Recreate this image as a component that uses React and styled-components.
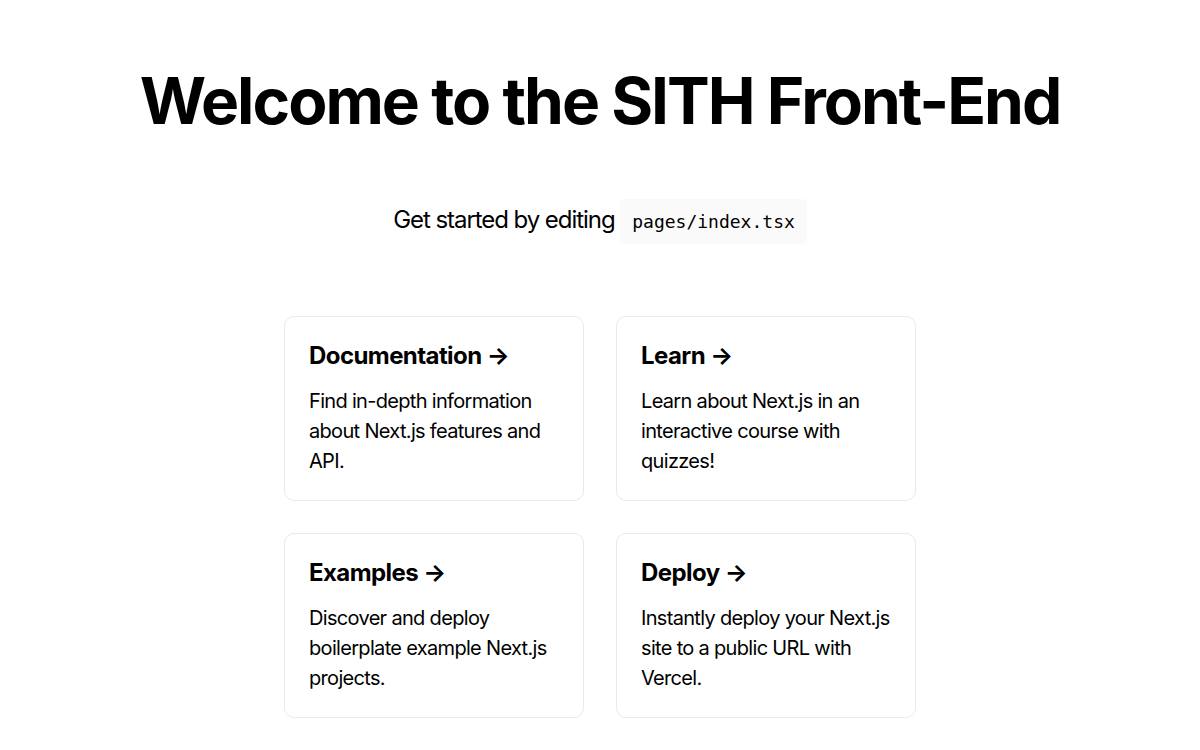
import React from "react";
import styled, { createGlobalStyle } from "styled-components";

const Global = createGlobalStyle`
  html, body {
    padding: 0;
    margin: 0;
    font-family: Inter, "Noto Sans", "Liberation Sans", sans-serif;
    background: #fff;
    color: #000;
  }
  * { box-sizing: border-box; }
`;

const Container = styled.div`
  padding: 0 2rem;
`;

const Main = styled.main`
  min-height: 100vh;
  padding: 4rem 0;
  display: flex;
  flex-direction: column;
  justify-content: center;
  align-items: center;
`;

const Title = styled.h1`
  margin: 0;
  line-height: 1.15;
  font-size: 4rem;
  font-weight: 700;
  letter-spacing: -0.031em;
  text-align: center;
`;

const Description = styled.p`
  margin: 4rem 0 62px;
  line-height: 1.5;
  font-size: 1.5rem;
  text-align: center;
  letter-spacing: -0.044em;
`;

const Code = styled.code`
  background: #fafafa;
  border-radius: 5px;
  padding: 0.75rem;
  font-size: 18px;
  line-height: 1;
  font-family: "DejaVu Sans Mono", "Liberation Mono", monospace;
  letter-spacing: 0;
`;

const Grid = styled.div`
  display: flex;
  align-items: center;
  justify-content: center;
  flex-wrap: wrap;
  max-width: 800px;
`;

const Card = styled.a`
  margin: 1rem;
  padding: 1.5rem;
  text-align: left;
  color: inherit;
  text-decoration: none;
  border: 1px solid #eaeaea;
  border-radius: 10px;
  width: 300px;
  max-width: 300px;
`;

const CardTitle = styled.h2`
  margin: 0 0 1rem 0;
  font-size: 1.5rem;
  line-height: 29px;
  font-weight: 700;
  letter-spacing: -0.024em;
`;

const CardText = styled.p`
  margin: 0;
  font-size: 1.25rem;
  line-height: 1.5;
  letter-spacing: -0.034em;
`;

const cards = [
  { title: "Documentation", text: "Find in-depth information about Next.js features and API." },
  { title: "Learn", text: "Learn about Next.js in an interactive course with quizzes!" },
  { title: "Examples", text: "Discover and deploy boilerplate example Next.js projects." },
  { title: "Deploy", text: "Instantly deploy your Next.js site to a public URL with Vercel." },
];

export default function App() {
  return (
    <Container>
      <Global />
      <Main>
        <Title>Welcome to the SITH Front-End</Title>
        <Description>
          Get started by editing <Code>pages/index.tsx</Code>
        </Description>
        <Grid>
          {cards.map((c) => (
            <Card key={c.title} href="#">
              <CardTitle>{c.title} &rarr;</CardTitle>
              <CardText>{c.text}</CardText>
            </Card>
          ))}
        </Grid>
      </Main>
    </Container>
  );
}
